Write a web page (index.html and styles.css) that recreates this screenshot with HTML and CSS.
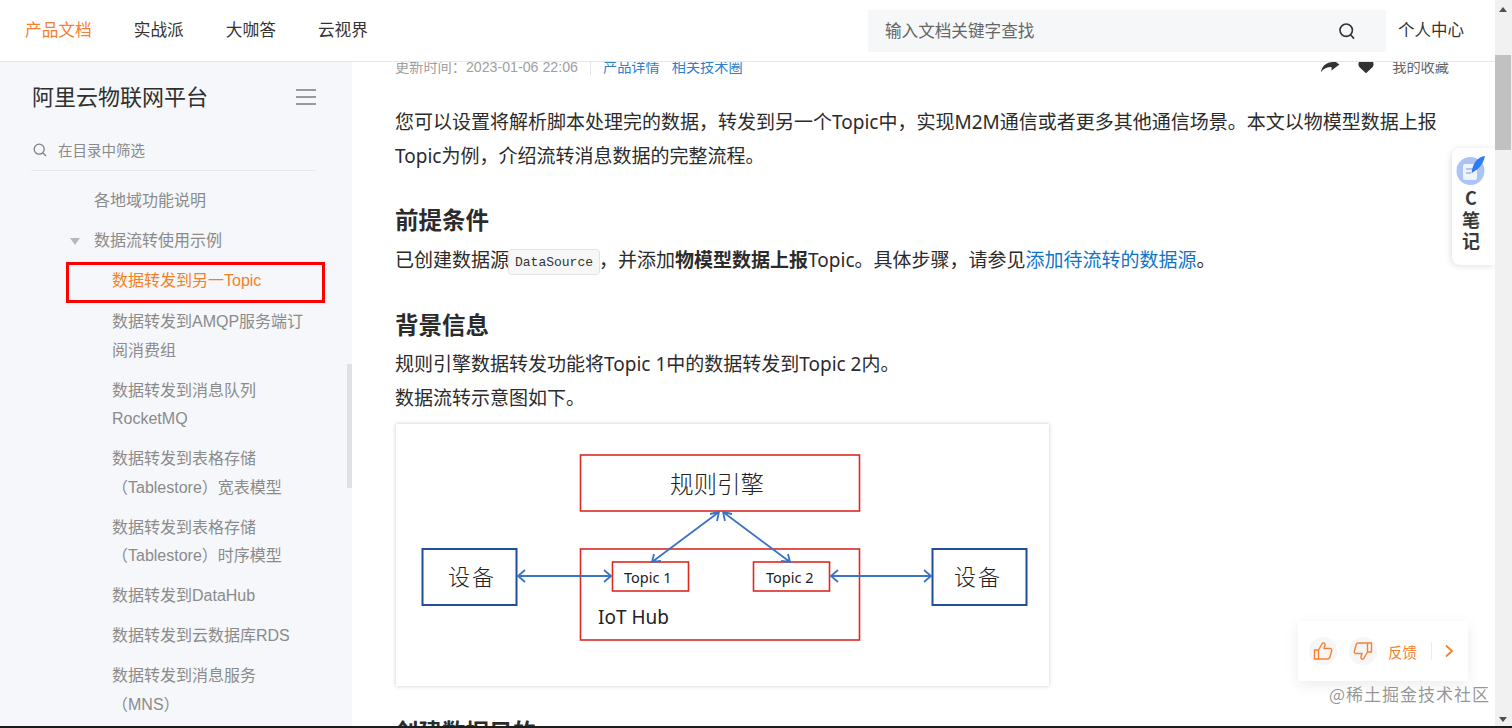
FILE: index.html
```html
<!DOCTYPE html>
<html lang="zh-CN">
<head>
<meta charset="utf-8">
<title>数据转发到另一Topic</title>
<link rel="stylesheet" href="styles.css">
</head>
<body>
<div class="shell">
  <div class="page">
    <header class="topbar">
      <nav class="nav">
        <a class="nav-link is-active">产品文档</a>
        <a class="nav-link">实战派</a>
        <a class="nav-link">大咖答</a>
        <a class="nav-link">云视界</a>
      </nav>
      <div class="search">
        <span class="search-text">输入文档关键字查找</span>
        <svg class="search-icon" viewBox="0 0 18 18" width="18" height="18"><circle cx="8.2" cy="8.2" r="6.2"/><path d="M12.6 12.8 16 16.6"/></svg>
      </div>
      <a class="user-link">个人中心</a>
    </header>
    <div class="main">
      <aside class="sidebar">
        <div class="side-head">
          <h1 class="side-title">阿里云物联网平台</h1>
          <div class="burger"><i></i><i></i><i></i></div>
        </div>
        <div class="filter">
          <svg class="filter-icon" viewBox="0 0 14 14" width="14" height="14"><circle cx="6.2" cy="6.2" r="5"/><path d="M10 10l3 3"/></svg>
          <span>在目录中筛选</span>
        </div>
        <ul class="tree">
          <li class="tree-item lvl2">各地域功能说明</li>
          <li class="tree-item lvl2 has-caret"><span class="caret"></span>数据流转使用示例</li>
          <li class="tree-item lvl3 is-current">数据转发到另一Topic</li>
          <li class="tree-item lvl3">数据转发到AMQP服务端订阅消费组</li>
          <li class="tree-item lvl3">数据转发到消息队列RocketMQ</li>
          <li class="tree-item lvl3">数据转发到表格存储（Tablestore）宽表模型</li>
          <li class="tree-item lvl3">数据转发到表格存储（Tablestore）时序模型</li>
          <li class="tree-item lvl3">数据转发到DataHub</li>
          <li class="tree-item lvl3">数据转发到云数据库RDS</li>
          <li class="tree-item lvl3">数据转发到消息服务（MNS）</li>
        </ul>
        <div class="side-thumb"></div>
      </aside>
      <main class="content">
        <div class="article">
          <div class="meta">
            <span class="meta-time">更新时间：2023-01-06 22:06</span>
            <span class="meta-sep"></span>
            <a class="meta-link">产品详情</a>
            <a class="meta-link">相关技术圈</a>
            <span class="meta-actions">
              <svg class="act-share" viewBox="0 0 20 16" width="20" height="16"><path d="M11.5 0.8 19.4 6.6 11.5 12.4V8.9C7 8.9 3.6 10.4 0.9 14.2 1.8 8.6 5.4 4.7 11.5 4.2Z"/></svg>
              <svg class="act-heart" viewBox="0 0 18 16" width="16" height="15"><path d="M9 15.6 2 9.2C-.4 6.8.2 3 2.6 1.5 4.8.2 7.4.8 9 2.8 10.6.8 13.2.2 15.4 1.5 17.8 3 18.4 6.8 16 9.2Z"/></svg>
              <span class="act-fav">我的收藏</span>
            </span>
          </div>
          <p class="para intro">您可以设置将解析脚本处理完的数据，转发到另一个Topic中，实现M2M通信或者更多其他通信场景。本文以物模型数据上报Topic为例，介绍流转消息数据的完整流程。</p>
          <h2 class="heading first">前提条件</h2>
          <p class="para">已创建数据源<code class="chip">DataSource</code>，并添加<strong>物模型数据上报</strong>Topic。具体步骤，请参见<a class="link">添加待流转的数据源</a>。</p>
          <h2 class="heading second">背景信息</h2>
          <p class="para">规则引擎数据转发功能将Topic 1中的数据转发到Topic 2内。<br>数据流转示意图如下。</p>
          <figure class="figure">
            <svg class="diagram" viewBox="0 0 653 262" width="653" height="262">
              <g class="box-red">
                <rect x="184.5" y="31" width="279" height="56"/>
                <rect x="184.5" y="125" width="279" height="91"/>
                <rect x="216.5" y="138" width="76" height="29"/>
                <rect x="357.5" y="138" width="76" height="29"/>
              </g>
              <g class="box-blue">
                <rect x="26.5" y="125" width="94" height="56"/>
                <rect x="536.5" y="125" width="94" height="56"/>
              </g>
              <g class="arrows">
                <path d="M122 152H215M129 146l-7 6 7 6M208 146l7 6-7 6"/>
                <path d="M435 152H535M442 146l-7 6 7 6M528 146l7 6-7 6"/>
                <path d="M256 138 323 88M314 90l9-2-2 9M258 130l-2 8 9-1"/>
                <path d="M394 138 327 88M336 90l-9-2 2 9M392 130l2 8-9-1"/>
              </g>
              <text class="dg-cjk" x="274" y="69">规则引擎</text>
              <text class="dg-cjk small" x="52" y="161">设备</text>
              <text class="dg-cjk small" x="558" y="161">设备</text>
              <text class="dg-topic" x="228" y="159">Topic 1</text>
              <text class="dg-topic" x="370" y="159">Topic 2</text>
              <text class="dg-hub" x="202" y="200">IoT Hub</text>
            </svg>
          </figure>
          <h2 class="heading third">创建数据目的</h2>
        </div>
        <div class="note">
          <svg class="note-icon" viewBox="0 0 30 30" width="30" height="30">
            <circle cx="14.5" cy="16" r="14" fill="#a9c4f5"/>
            <rect x="7" y="9" width="14" height="16" rx="2" fill="#eef3fe"/>
            <path d="M10 14h7M10 18h5" stroke="#9db7ea" stroke-width="1.4"/>
            <path d="M29 1C22 2 17 7 15.500 18 19 16 27 12 29 1Z" fill="#2d7cf0"/>
          </svg>
          <span class="note-text">C</span>
          <span class="note-text">笔</span>
          <span class="note-text">记</span>
        </div>
        <div class="feedback">
          <span class="fb-circle"><svg viewBox="0 0 20 20" width="20" height="20"><path d="M1.500 9H5.500V18H1.500ZM5.500 9 9.500 2C11.500 1.500 12.500 3 12 4.500L11 7.500H17C18.500 7.500 19 8.700 18.600 10L16.800 16.500C16.500 17.500 15.700 18 14.800 18H5.500"/></svg></span>
          <span class="fb-circle"><svg viewBox="0 0 20 20" width="20" height="20"><path d="M18.500 11H14.500V2H18.500ZM14.500 11 10.500 18C8.500 18.500 7.500 17 8 15.500L9 12.500H3C1.500 12.500 1 11.300 1.400 10L3.200 3.500C3.500 2.500 4.300 2 5.200 2H14.500"/></svg></span>
          <span class="fb-label">反馈</span>
          <span class="fb-sep"></span>
          <svg class="fb-chevron" viewBox="0 0 10 14" width="10" height="14"><path d="M2 1.500 8 7 2 12.500"/></svg>
        </div>
        <div class="watermark">@稀土掘金技术社区</div>
      </main>
    </div>
  </div>
  <div class="scrollbar">
    <span class="sb-up"></span>
    <span class="sb-thumb"></span>
    <span class="sb-down"></span>
  </div>
</div>
<div class="edge"></div>
</body>
</html>
```
FILE: styles.css
```css
* { box-sizing: border-box; }
html, body { margin: 0; height: 100%; overflow: hidden; }
body {
  display: flex;
  flex-direction: column;
  background: #fff;
  color: #2b2b2b;
  font-family: "Noto Sans", "Noto Sans CJK SC", sans-serif;
}
.shell { flex: 1; min-height: 0; display: flex; }
.edge { height: 2px; background: #1c1c1c; }
.page { flex: 1; min-width: 0; display: flex; flex-direction: column; }

/* top bar */
.topbar {
  height: 62px;
  flex: none;
  display: flex;
  align-items: center;
  padding: 0 31px 3px 25px;
  background: #fff;
  border-bottom: 1px solid #e4e6e8;
  position: relative;
  z-index: 3;
}
.nav { display: flex; gap: 42px; flex: 1; }
.nav-link { font-size: 16.700px; color: #333; font-family: "Noto Sans CJK SC", sans-serif; }
.nav-link.is-active { color: #f57f35; }
.search {
  width: 518px;
  height: 42px;
  margin-top: 3px;
  display: flex;
  align-items: center;
  justify-content: space-between;
  padding: 0 30px 2px 17px;
  background: #f5f7f9;
}
.search-text { font-size: 16.600px; color: #666; font-family: "Noto Sans CJK SC", sans-serif; }
.search-icon { fill: none; stroke: #333; stroke-width: 1.6; margin-top: 2px; }
.user-link { margin-left: 12px; font-size: 16.500px; color: #333; font-family: "Noto Sans CJK SC", sans-serif; }

.main { flex: 1; min-height: 0; display: flex; }

/* sidebar */
.sidebar {
  width: 352px;
  flex: none;
  position: relative;
  overflow: hidden;
  background: #f5f7fa;
  padding: 0 36px 0 31px;
  font-family: "Liberation Sans", "Noto Sans CJK SC", sans-serif;
}
.side-head { display: flex; align-items: center; justify-content: space-between; height: 70px; }
.side-title { margin: -4px 0 0; font-size: 22px; font-weight: 400; color: #2f2f2f; padding-left: 1px; }
.burger { width: 20px; display: flex; flex-direction: column; gap: 5px; }
.burger i { display: block; height: 2px; background: #9a9a9a; }
.filter {
  height: 39px;
  display: flex;
  align-items: center;
  gap: 11px;
  padding: 0 0 4px 2px;
  border-bottom: 1px solid #e6e8eb;
  font-size: 14.500px;
  color: #8a8a8a;
}
.filter-icon { fill: none; stroke: #7d7d7d; stroke-width: 1.3; margin-top: 2px; }
.tree { list-style: none; margin: 10px 0 0; padding: 0; }
.tree-item { font-size: 16px; line-height: 28.500px; padding-top: 6px; padding-bottom: 5.500px; color: #8b8b8b; }
.lvl2 { padding-left: 63px; }
.lvl3 { padding-left: 81px; padding-right: 5px; }
.has-caret { position: relative; }
.caret {
  position: absolute;
  left: 39px;
  top: 17px;
  border-left: 5px solid transparent;
  border-right: 5px solid transparent;
  border-top: 7px solid #b5b8bc;
}
.tree-item.is-current {
  color: #f57f25;
  margin: 1px -9px -1px 35px;
  padding: 1px 0 0 43px;
  height: 41px;
  line-height: 29px;
  border: 3px solid #f00;
}
.side-thumb {
  position: absolute;
  right: 0;
  top: 302px;
  width: 5px;
  height: 124px;
  background: #dfe1e4;
}

/* article */
.content { flex: 1; min-width: 0; position: relative; overflow: hidden; }
.article { margin-top: -6px; padding: 0 45px 0 43px; }
.meta { display: flex; align-items: center; height: 20px; font-size: 14.200px; font-family: "Liberation Sans", "Noto Sans CJK SC", sans-serif; }
.meta-time { color: #a0a0a0; }
.meta-sep { width: 1px; height: 18px; margin: 0 12px 0 12px; background: #e2e4e7; }
.meta-link { color: #2f7fc9; margin-right: 12px; }
.meta-actions { margin-left: auto; display: flex; align-items: center; }
.act-share { fill: #333; margin-right: 18px; }
.act-heart { fill: #333; margin-right: 18px; }
.act-fav { color: #666; margin-right: 1px; }
.para { margin: 0; font-size: 19px; line-height: 34px; color: #2b2b2b; }
.intro { margin-top: 29px; }
.heading { margin: 0; font-size: 23.500px; line-height: 34px; font-weight: 700; color: #2b2b2b; }
.heading.first { margin-top: 30px; padding-bottom: 6px; }
.heading.second { margin-top: 31px; padding-bottom: 5px; }
.heading.third { margin-top: 29px; }
.chip {
  display: inline-block;
  height: 26px;
  line-height: 25px;
  padding: 0 6px;
  margin: 0 -1px 0 -1px;
  vertical-align: 1px;
  font-family: "Liberation Mono", monospace;
  font-size: 13px;
  color: #333;
  background: #f7f7f7;
  border: 1px solid #e3e3e3;
  border-radius: 4px;
}
.para strong { font-weight: 700; }
.link { color: #0f75c9; }
.figure {
  margin: 9px 0 0 1px;
  width: 653px;
  height: 262px;
  background: #fff;
  box-shadow: 0 0 4px rgba(0,0,0,.22);
}
.diagram { display: block; }
.box-red rect { fill: none; stroke: #dc2a22; stroke-width: 1.600; }
.box-blue rect { fill: none; stroke: #1f4e9c; stroke-width: 2; }
.arrows path { fill: none; stroke: #3a74c4; stroke-width: 1.800; }
.dg-cjk { font-family: "Noto Sans CJK SC", sans-serif; font-size: 23.500px; font-weight: 300; fill: #222; }
.dg-cjk.small { font-size: 22px; letter-spacing: 2px; }
.dg-topic { font-family: "Noto Sans", sans-serif; font-size: 14.500px; fill: #1c1c1c; }
.dg-hub { font-family: "Noto Sans", sans-serif; font-size: 19px; fill: #222; }

/* overlays */
.note {
  position: absolute;
  right: 0;
  top: 86px;
  width: 43px;
  height: 117px;
  display: flex;
  flex-direction: column;
  align-items: center;
  padding: 7px 5px 0 0;
  background: #fff;
  border-radius: 8px 0 0 8px;
  box-shadow: -1px 1px 6px rgba(0,0,0,.13);
}
.note-icon { flex: none; }
.note-text { font-size: 18px; line-height: 21.500px; font-weight: 700; color: #3a3a3a; font-family: "Noto Sans CJK SC", sans-serif; }
.note-icon + .note-text { margin-top: 2px; }
.feedback {
  position: absolute;
  right: 27px;
  top: 559px;
  width: 170px;
  height: 60px;
  display: flex;
  align-items: center;
  padding-left: 11px;
  background: #fff;
  box-shadow: 0 4px 14px rgba(0,0,0,.08);
}
.fb-circle {
  width: 28px;
  height: 28px;
  margin-right: 12px;
  display: flex;
  align-items: center;
  justify-content: center;
  border-radius: 50%;
  background: #f6f6f6;
}
.fb-circle svg { fill: none; stroke: #f5812f; stroke-width: 1.400; stroke-linejoin: round; }
.fb-label { margin-left: -1px; font-size: 14.500px; color: #f5812f; font-family: "Noto Sans CJK SC", sans-serif; }
.fb-sep { width: 1px; height: 18px; margin: 0 12px 0 14px; background: #ececec; }
.fb-chevron { fill: none; stroke: #f5812f; stroke-width: 1.800; }
.watermark {
  position: absolute;
  right: 5px;
  top: 620px;
  font-size: 17px;
  line-height: 24px;
  letter-spacing: 1px;
  color: rgba(110,110,110,.72);
  font-family: "Noto Sans CJK SC", sans-serif;
}

/* page scrollbar */
.scrollbar { width: 17px; flex: none; position: relative; background: #f1f1f1; }
.sb-up, .sb-down, .sb-thumb { position: absolute; }
.sb-up { left: 4px; top: 7px; border: 4px solid transparent; border-top: 0; border-bottom: 5px solid #505050; }
.sb-down { left: 4px; bottom: 4px; border: 4px solid transparent; border-bottom: 0; border-top: 5px solid #505050; }
.sb-thumb { left: 0; right: 1px; top: 55px; height: 95px; background: #c1c1c1; }
```
